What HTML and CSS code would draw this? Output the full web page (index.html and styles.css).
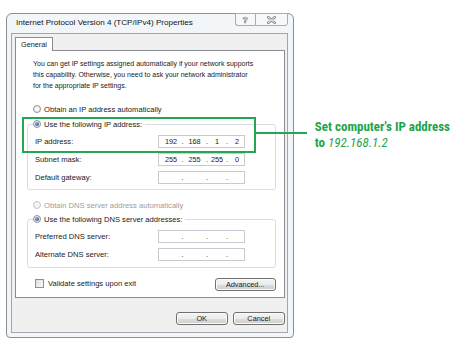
FILE: index.html
```html
<!DOCTYPE html>
<html lang="en">
<head>
    <meta charset="UTF-8">
    <title>Internet Protocol Version 4 (TCP/IPv4) Properties</title>
    <link rel="stylesheet" href="styles.css">
</head>
<body>
    <div class="page">
        <div class="window">
            <div class="titlebar">
                <span class="title">Internet Protocol Version 4 (TCP/IPv4) Properties</span>
                <div class="caption-btns">
                    <span class="cap help">?</span>
                    <span class="cap close">
                        <svg width="9" height="8" viewBox="0 0 9 8">
                            <path d="M1 1 L8 7 M8 1 L1 7" stroke="#8a8a8a" stroke-width="2.6" stroke-linecap="round"/>
                            <path d="M1 1 L8 7 M8 1 L1 7" stroke="#f4f6f8" stroke-width="1" stroke-linecap="round"/>
                        </svg>
                    </span>
                </div>
            </div>

            <div class="client">
                <div class="tabs"><span class="tab">General</span></div>

                <div class="panel">
                    <p class="intro">You can get IP settings assigned automatically if your network supports<br>this capability. Otherwise, you need to ask your network administrator<br>for the appropriate IP settings.</p>

                    <div class="option"><span class="radio"></span>Obtain an IP address automatically</div>

                    <fieldset class="group ip-group">
                        <legend><span class="radio checked"></span>Use the following IP address:</legend>
                        <div class="field">
                            <span class="label">IP address:</span>
                            <span class="ip"><b>192</b><i>.</i><b>168</b><i>.</i><b>1</b><i>.</i><b>2</b></span>
                        </div>
                        <div class="field">
                            <span class="label">Subnet mask:</span>
                            <span class="ip"><b>255</b><i>.</i><b>255</b><i>.</i><b>255</b><i>.</i><b>0</b></span>
                        </div>
                        <div class="field">
                            <span class="label">Default gateway:</span>
                            <span class="ip"><b></b><i>.</i><b></b><i>.</i><b></b><i>.</i><b></b></span>
                        </div>
                    </fieldset>

                    <div class="option disabled"><span class="radio"></span>Obtain DNS server address automatically</div>

                    <fieldset class="group dns-group">
                        <legend><span class="radio checked"></span>Use the following DNS server addresses:</legend>
                        <div class="field">
                            <span class="label">Preferred DNS server:</span>
                            <span class="ip"><b></b><i>.</i><b></b><i>.</i><b></b><i>.</i><b></b></span>
                        </div>
                        <div class="field">
                            <span class="label">Alternate DNS server:</span>
                            <span class="ip"><b></b><i>.</i><b></b><i>.</i><b></b><i>.</i><b></b></span>
                        </div>
                    </fieldset>

                    <div class="panel-footer">
                        <span class="check-label"><span class="checkbox"></span>Validate settings upon exit</span>
                        <span class="btn advanced">Advanced...</span>
                    </div>
                </div>

                <div class="dialog-btns">
                    <span class="btn">OK</span>
                    <span class="btn">Cancel</span>
                </div>
            </div>
        </div>

        <div class="note">Set computer's IP address<br>to <em>192.168.1.2</em></div>

        <!-- callout overlay -->
        <div class="highlight"></div>
        <div class="leader"></div>
    </div>
</body>
</html>
```

FILE: styles.css
```css
* {
    margin: 0;
    padding: 0;
    box-sizing: border-box;
}

body {
    background: #fff;
    font-family: 'Liberation Sans', Arial, sans-serif;
    color: #1a1a1a;
}

.page {
    position: relative;
    width: 450px;
    height: 339px;
    display: flex;
    align-items: flex-start;
}

/* dialog frame */
.window {
    margin: 13px 0 0 6px;
    width: 290px;
    height: 325px;
    border: 1px solid #8b8f94;
    border-radius: 6px 6px 4px 4px;
    background: #f3f6f9;
    padding: 0 5px 4px 4px;
    display: flex;
    flex-direction: column;
}

.titlebar {
    height: 19px;
    display: flex;
    justify-content: space-between;
    align-items: flex-start;
}

.title {
    margin: 4px 0 0 5px;
    font-size: 8.1px;
    color: #111;
}

.caption-btns {
    display: flex;
    margin-top: -1px;
}

.cap {
    height: 13px;
    border: 1px solid #a7adb4;
    background: #f6f8fa;
    display: flex;
    align-items: center;
    justify-content: center;
}

.help {
    width: 20px;
    border-radius: 0 0 0 3px;
    border-right: none;
    font-size: 9px;
    font-weight: bold;
    color: #fff;
    -webkit-text-stroke: 0.6px #888;
}

.close {
    width: 33px;
    border-radius: 0 0 3px 0;
}

.client {
    flex: 1;
    border: 1px solid #a3a7ac;
    background: #f0f0f0;
    padding: 3px 2px 0 3px;
    display: flex;
    flex-direction: column;
}

.tabs {
    display: flex;
    height: 13px;
}

.tab {
    width: 38px;
    border: 1px solid #898c95;
    border-bottom: none;
    background: #fff;
    font-size: 7.3px;
    padding: 2px 0 0 5px;
    position: relative;
    z-index: 1;
    margin-bottom: -1px;
}

.panel {
    height: 248px;
    border: 1px solid #898c95;
    background: #fff;
    padding: 0 8px 0 11px;
    font-size: 7.6px;
}

.intro {
    margin-top: 8px;
    padding-left: 6px;
    font-size: 7px;
    line-height: 10.8px;
    white-space: nowrap;
}

.option {
    height: 12px;
    display: flex;
    align-items: center;
    padding-left: 6px;
    margin-top: 12px;
}

.option.disabled {
    color: #9c9c9c;
    margin-top: 9px;
}

.radio {
    width: 8px;
    height: 8px;
    border: 1px solid #8e9297;
    border-radius: 50%;
    background: radial-gradient(circle, #fff 0%, #e2e4e7 100%);
    margin-right: 3px;
    display: inline-flex;
    align-items: center;
    justify-content: center;
}

.disabled .radio {
    border-color: #c4c6c9;
    background: #f4f4f4;
}

.radio.checked::after {
    content: '';
    width: 4px;
    height: 4px;
    border-radius: 50%;
    background: radial-gradient(circle at 35% 35%, #8fb6dc 0%, #1f4f88 80%);
}

.group {
    border: 1px solid #d8dde2;
    border-radius: 3px;
    padding: 0 0 5px 7px;
}

.group legend {
    height: 12px;
    display: flex;
    align-items: center;
    margin-left: -2px;
    padding-right: 3px;
}

.ip-group {
    margin-top: 3px;
}

.dns-group {
    margin-top: 2px;
    padding-bottom: 6px;
}

.field {
    height: 13px;
    display: flex;
    align-items: center;
    margin-top: 5px;
}

.label {
    width: 123px;
}

.ip {
    width: 87px;
    height: 13px;
    border: 1px solid #c7cbd1;
    background: #fff;
    display: grid;
    grid-template-columns: 18px 5px 19px 6px 14px 6px 14px;
    padding-left: 3px;
    align-items: center;
    font-size: 7.3px;
}

.ip b {
    font-weight: normal;
    text-align: center;
}

.ip i {
    font-style: normal;
    text-align: center;
}

.panel-footer {
    margin-top: 10px;
    height: 13px;
    display: flex;
    align-items: center;
    justify-content: space-between;
    padding-left: 8px;
}

.check-label {
    display: flex;
    align-items: center;
    margin-top: -3px;
}

.checkbox {
    width: 9px;
    height: 9px;
    border: 1px solid #8e9297;
    background: linear-gradient(135deg, #dcdee1 0%, #fbfbfb 100%);
    margin-right: 4px;
}

.btn {
    width: 52px;
    height: 13px;
    border: 1px solid #707070;
    border-radius: 3px;
    background: linear-gradient(#f4f4f4 0%, #ebebeb 50%, #dcdcdc 51%, #cfcfcf 100%);
    box-shadow: inset 0 0 0 1px #fbfbfb;
    display: flex;
    align-items: center;
    justify-content: center;
    font-size: 7.3px;
}

.advanced {
    width: 61px;
}

.dialog-btns {
    margin-top: 14px;
    display: flex;
    justify-content: flex-end;
    gap: 5px;
}

/* annotation */
.note {
    margin: 119px 0 0 21px;
    font-family: Roboto, 'Liberation Sans', sans-serif;
    font-weight: bold;
    font-size: 13px;
    line-height: 16px;
    color: #1fa34d;
    font-stretch: 75%;
    white-space: nowrap;
}

.note em {
    font-weight: normal;
}

.highlight {
    position: absolute;
    left: 22px;
    top: 117px;
    width: 234px;
    height: 36px;
    border: 2px solid #24a652;
}

.leader {
    position: absolute;
    left: 255px;
    top: 132px;
    width: 52px;
    border-top: 2px solid #24a652;
}
```
